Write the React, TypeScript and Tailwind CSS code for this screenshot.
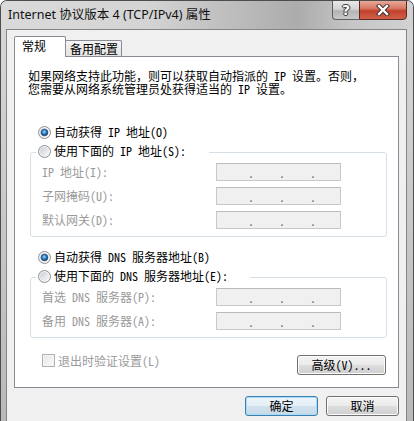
import React from "react";

function Radio({ checked, id }: { checked?: boolean; id: string }) {
  return (
    <svg width="13" height="13" viewBox="0 0 13 13" className="shrink-0 block">
      <defs>
        <linearGradient id={`rf${id}`} x1="0" y1="0" x2="1" y2="1">
          <stop offset="0" stopColor="#cbcfd5" />
          <stop offset="1" stopColor="#f7f8f9" />
        </linearGradient>
        <radialGradient id={`rd${id}`} cx="0.45" cy="0.4" r="0.6">
          <stop offset="0" stopColor="#9fe0fb" />
          <stop offset="0.5" stopColor="#2f86c8" />
          <stop offset="1" stopColor="#0e3e6e" />
        </radialGradient>
      </defs>
      <circle cx="6.5" cy="6.5" r="6" fill="#f4f4f4" stroke="#8c8f94" strokeWidth="1" />
      <circle cx="6.5" cy="6.5" r="4.6" fill={`url(#rf${id})`} />
      {checked && <circle cx="6.5" cy="6.5" r="3.3" fill={`url(#rd${id})`} stroke="#163f69" strokeWidth="0.7" />}
    </svg>
  );
}

function IpBox() {
  return (
    <div className="w-[125px] h-[18px] border border-[#c6c8ca] border-t-[#b9bbbd] bg-[#f0f0f0] flex items-end pb-[1px] text-[#6d6d6d] text-[12px] leading-[12px]">
      <span className="w-[31px]" />
      <span className="w-[6px] text-center">.</span>
      <span className="w-[25px]" />
      <span className="w-[6px] text-center">.</span>
      <span className="w-[25px]" />
      <span className="w-[6px] text-center">.</span>
    </div>
  );
}

function Row({ label }: { label: string }) {
  return (
    <div className="flex items-center h-[18px]">
      <span className="w-[174px] text-[#9a9a9a] whitespace-pre">{label}</span>
      <IpBox />
    </div>
  );
}

const btn =
  "h-[20px] rounded-[3px] border border-[#707070] bg-[linear-gradient(to_bottom,#f3f3f3_0%,#ebebeb_48%,#dddddd_52%,#cfcfcf_100%)] shadow-[inset_0_0_0_1px_#fcfcfc] flex items-center justify-center text-[12px] text-black";

export default function App() {
  return (
    <div className="relative w-[414px] h-[421px] overflow-hidden rounded-t-[7px] border-t border-l border-r border-[#4d4d4d] bg-[linear-gradient(to_bottom,#d8d8d8,#b9b9b9)] font-['Noto_Sans_Mono_CJK_SC','Noto_Sans_CJK_SC',sans-serif] text-[12px] leading-[14px] text-black">
      {/* title bar */}
      <div className="h-[28px] flex items-center pl-[7px] bg-[linear-gradient(to_right,#dadada_0%,#d4d4d4_35%,#b9b9b9_60%,#acacac_72%,#c6c6c6_85%,#d2d2d2_100%)]">
        <span className="text-[12.5px] font-['Noto_Sans','Noto_Sans_CJK_SC',sans-serif] text-[#111]">
          Internet 协议版本 4 (TCP/IPv4) 属性
        </span>
      </div>
      {/* caption buttons */}
      <div className="absolute top-[-1px] right-[6px] flex">
        <div className="w-[27px] h-[20px] rounded-bl-[4px] border border-[#5e5e5e] border-r-0 bg-[linear-gradient(to_bottom,#e8e8e8_0%,#d4d4d4_45%,#b4b4b4_55%,#c8c8c8_100%)] flex items-center justify-center">
          <span className="font-['DejaVu_Sans',sans-serif] font-bold text-[14px] leading-[14px] text-white [text-shadow:0_0_1px_#333,0_0_1px_#333,1px_0_0_#444,-1px_0_0_#444,0_1px_0_#444,0_-1px_0_#444]">?</span>
        </div>
        <div className="w-[48px] h-[20px] rounded-br-[4px] border border-[#5a2a22] bg-[linear-gradient(to_bottom,#e8a899_0%,#d97a66_40%,#c2422c_55%,#d0614a_100%)] flex items-center justify-center">
          <svg width="14" height="12" viewBox="0 0 14 12">
            <path d="M3 2 L11 10 M11 2 L3 10" stroke="#3a2a2a" strokeWidth="4.2" strokeLinecap="square" />
            <path d="M3 2 L11 10 M11 2 L3 10" stroke="#ffffff" strokeWidth="2.4" strokeLinecap="square" />
          </svg>
        </div>
      </div>

      {/* client area */}
      <div className="ml-[5px] mr-[6px] h-[393px] border-t border-l border-r border-[#858585] bg-[#f0f0f0] px-[7px] pt-[6px]">
        {/* tabs */}
        <div className="flex items-end h-[20px]">
          <div className="relative z-10 h-[21px] w-[52px] -mb-[1px] border border-b-0 border-[#898c95] bg-white pl-[7px] pt-[2px] rounded-t-[2px]">
            常规
          </div>
          <div className="h-[16px] w-[57px] -ml-[1px] border border-b-0 border-[#898c95] bg-[linear-gradient(to_bottom,#f4f4f4,#e3e3e3)] pl-[4px] pt-[1px] leading-[14px] rounded-t-[2px]">
            备用配置
          </div>
        </div>

        {/* panel */}
        <div className="h-[332px] border border-[#898c95] bg-white">
          <p className="pt-[12px] pl-[13px] leading-[13px] whitespace-pre">
            {"如果网络支持此功能，则可以获取自动指派的 IP 设置。否则，\n您需要从网络系统管理员处获得适当的 IP 设置。"}
          </p>

          <div className="mt-[29px] ml-[23px] flex items-center h-[16px] gap-[3px]">
            <Radio checked id="a" />
            <span className="whitespace-pre">自动获得 IP 地址(O)</span>
          </div>

          <fieldset className="mt-[3px] ml-[15px] mr-[11px] border border-[#d5dfe5] rounded-[3px] pb-[7px]">
            <legend className="ml-[5px] w-[173px] h-[19px] pl-[2px]">
              <div className="flex items-center h-[16px] gap-[3px]">
                <Radio id="b" />
                <span className="whitespace-pre">使用下面的 IP 地址(S):</span>
              </div>
            </legend>
            <div className="mt-[1px] pl-[11px] flex flex-col gap-[6px]">
              <Row label="IP 地址(I):" />
              <Row label="子网掩码(U):" />
              <Row label="默认网关(D):" />
            </div>
          </fieldset>

          <div className="mt-[12px] ml-[23px] flex items-center h-[16px] gap-[3px]">
            <Radio checked id="c" />
            <span className="whitespace-pre">自动获得 DNS 服务器地址(B)</span>
          </div>

          <fieldset className="mt-[3px] ml-[15px] mr-[11px] border border-[#d5dfe5] rounded-[3px] pb-[7px]">
            <legend className="ml-[5px] w-[214px] h-[19px] pl-[2px]">
              <div className="flex items-center h-[16px] gap-[3px]">
                <Radio id="d" />
                <span className="whitespace-pre">使用下面的 DNS 服务器地址(E):</span>
              </div>
            </legend>
            <div className="mt-[1px] pl-[11px] flex flex-col gap-[6px]">
              <Row label="首选 DNS 服务器(P):" />
              <Row label="备用 DNS 服务器(A):" />
            </div>
          </fieldset>

          <div className="mt-[16px] ml-[27px] mr-[12px] flex items-start justify-between">
            <div className="flex items-center gap-[3px] h-[13px]">
              <div className="w-[13px] h-[13px] border border-[#b1b1b1] bg-[linear-gradient(135deg,#e6e6e6,#fbfbfb)] shadow-[inset_0_0_0_1px_#f4f4f4]" />
              <span className="text-[#9a9a9a] whitespace-pre">退出时验证设置(L)</span>
            </div>
            <div className={`${btn} mt-[1px] w-[89px]`}>
              <span className="whitespace-pre">高级(V)...</span>
            </div>
          </div>
        </div>

        {/* bottom buttons */}
        <div className="mt-[8px] flex justify-end gap-[8px]">
          <div className="w-[73px] h-[20px] rounded-[3px] border border-[#3c7fb1] bg-[linear-gradient(to_bottom,#eef6fb_0%,#e3eef6_48%,#d1e2ee_52%,#c6dae9_100%)] shadow-[inset_0_0_0_1px_#a8dcf6] flex items-center justify-center">
            确定
          </div>
          <div className={`${btn} w-[73px]`}>取消</div>
        </div>
      </div>
    </div>
  );
}
